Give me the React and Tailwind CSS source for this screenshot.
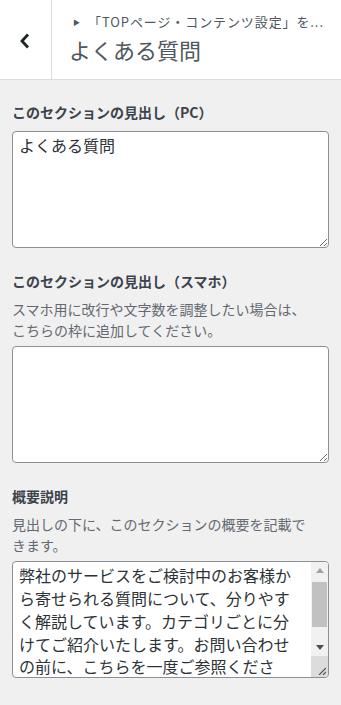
import React from 'react'

const font = { fontFamily: '"Noto Sans CJK JP", "Noto Sans", sans-serif' }

function Field({ label, description, value, scroll, first }) {
  return (
    <div className={first ? '' : 'mt-[23px]'}>
      <div className={`text-[14px] leading-[20px] font-bold text-[#3c434a] ${description ? 'mb-2' : 'mb-[9px]'}`}>
        {label}
      </div>
      {description && (
        <div className="text-[14px] leading-[21px] text-[#646970] mb-[5px]">
          {description.map((line, i) => (
            <div key={i} className="whitespace-nowrap">{line}</div>
          ))}
        </div>
      )}
      <div className="relative">
        <textarea
          readOnly
          value={value}
          className={`block w-full h-[117px] border border-[#8c8f94] rounded-[4px] bg-white text-[16px] leading-[1.4286] text-[#2c3338] py-[2px] pl-[6px] outline-none ${
            scroll ? 'pr-[23px] overflow-hidden resize-none' : 'pr-[6px] resize-y'
          }`}
          style={font}
        />
        {scroll && (
          <div className="absolute right-px top-px bottom-px w-[17px] flex flex-col rounded-r-[3px] overflow-hidden">
            <div className="h-[17px] flex items-center justify-center bg-[#f1f1f1]">
              <svg width="8" height="5" viewBox="0 0 8 5">
                <path d="M0 5 L4 0 L8 5 Z" fill="#a3a3a3" />
              </svg>
            </div>
            <div className="flex-1 bg-[#f1f1f1] px-[1px] pt-[3px]">
              <div className="h-[45px] bg-[#c1c1c1]" />
            </div>
            <div className="h-[17px] flex items-center justify-center bg-[#f1f1f1]">
              <svg width="8" height="5" viewBox="0 0 8 5">
                <path d="M0 0 L8 0 L4 5 Z" fill="#505050" />
              </svg>
            </div>
            <div className="h-[21px] bg-[#dcdcdc] flex items-end justify-end p-[2px]">
              <svg width="8" height="8" viewBox="0 0 8 8">
                <path d="M1 8 L8 1 M5 8 L8 5" stroke="#555" strokeWidth="1.2" />
              </svg>
            </div>
          </div>
        )}
      </div>
    </div>
  )
}

export default function App() {
  return (
    <div className="w-[341px] h-[705px] bg-[#f0f0f1] overflow-hidden" style={font}>
      <div className="h-20 bg-white border-b border-[#dcdcde] flex">
        <div className="w-[52px] shrink-0 border-r border-[#dcdcde] flex items-center justify-center">
          <svg width="12" height="16" viewBox="0 0 12 16" className="mt-[2px] -ml-[2px]">
            <path d="M9 1.5 L3 8 L9 14.5" fill="none" stroke="#1d2327" strokeWidth="2.8" />
          </svg>
        </div>
        <div className="flex-1 min-w-0 pl-[19px] pr-2 pt-[13px]">
          <div className="flex items-center text-[13px] leading-[18px] text-[#50575e] whitespace-nowrap">
            <span className="text-[7px] mr-[8px] ml-[2px]">▶</span>
            <span className="tracking-[0.9px]">「TOPページ・コンテンツ設定」を...</span>
          </div>
          <div className="text-[22px] leading-[30px] text-[#50575e] mt-[3px] -ml-[2px]">よくある質問</div>
        </div>
      </div>

      <div className="px-3 pt-[22px]">
        <Field first label="このセクションの見出し（PC）" value="よくある質問" />
        <Field
          label="このセクションの見出し（スマホ）"
          description={['スマホ用に改行や文字数を調整したい場合は、', 'こちらの枠に追加してください。']}
          value=""
        />
        <Field
          label="概要説明"
          description={['見出しの下に、このセクションの概要を記載で', 'きます。']}
          value={
            '弊社のサービスをご検討中のお客様か\nら寄せられる質問について、分りやす\nく解説しています。カテゴリごとに分\nけてご紹介いたします。お問い合わせ\nの前に、こちらを一度ご参照くださ\nい。'
          }
          scroll
        />
      </div>
    </div>
  )
}
